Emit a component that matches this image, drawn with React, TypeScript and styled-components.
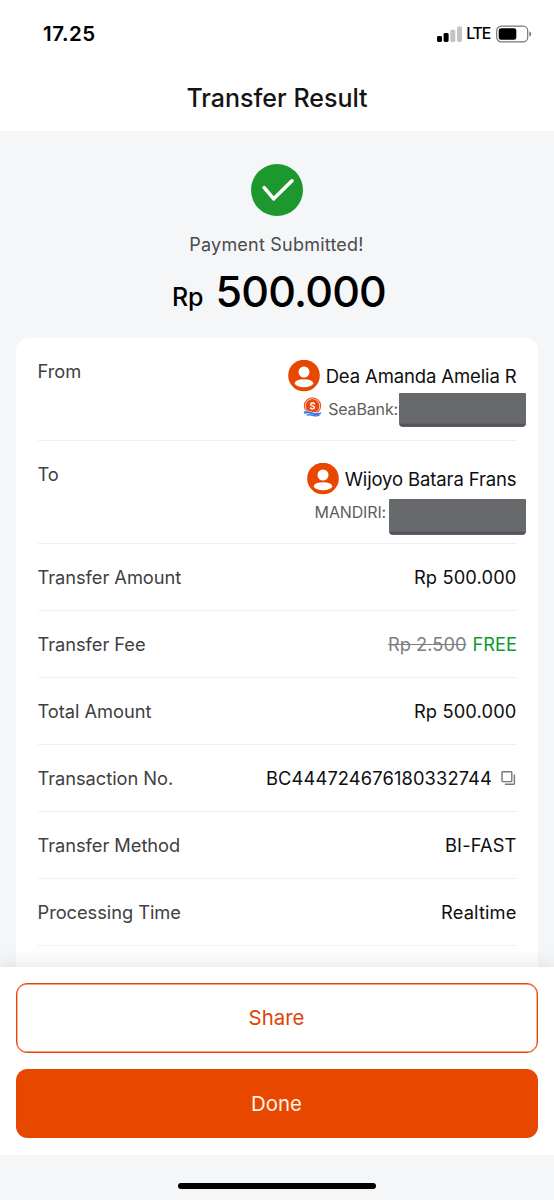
import React from "react";
import styled, { createGlobalStyle } from "styled-components";

const GlobalStyle = createGlobalStyle`
  * { box-sizing: border-box; }
  body {
    margin: 0;
    background: #f5f6f8;
    font-family: Inter, "Liberation Sans", sans-serif;
    color: #0e0e0f;
  }
`;

const Screen = styled.div`
  width: 554px;
  height: 1200px;
  display: flex;
  flex-direction: column;
  overflow: hidden;
  background: #f5f6f8;
`;

const StatusBar = styled.div`
  flex: none;
  height: 66px;
  padding: 1px 22px 0 43px;
  display: flex;
  justify-content: space-between;
  align-items: center;
  background: #fff;
`;

const Clock = styled.span`
  font-size: 20.5px;
  font-weight: 600;
  line-height: 24px;
  letter-spacing: 0.5px;
  color: #000;
`;

const StatusIcons = styled.div`
  display: flex;
  align-items: center;
`;

const Carrier = styled.span`
  margin: 1px 6px 0 4.5px;
  font-size: 15.8px;
  font-weight: 500;
  line-height: 20px;
  letter-spacing: -1.2px;
  color: #000;
`;

const Header = styled.header`
  flex: none;
  height: 65px;
  padding-bottom: 2px;
  display: flex;
  justify-content: center;
  align-items: center;
  background: #fff;
`;

const Title = styled.h1`
  margin: 0;
  font-size: 25px;
  font-weight: 500;
  line-height: 30px;
  letter-spacing: 0;
  color: #141414;
`;

const Content = styled.main`
  flex: 1;
  min-height: 0;
  overflow: hidden;
  padding: 0 16px;
`;

const Summary = styled.section`
  height: 207px;
  padding-top: 33px;
  display: flex;
  flex-direction: column;
  align-items: center;
`;

const Status = styled.p`
  margin: 17px 0 0;
  padding-right: 1px;
  font-size: 18px;
  line-height: 24px;
  letter-spacing: 0.22px;
  color: #4a4b4d;
`;

const Amount = styled.p`
  margin: 9px 0 0 4px;
  display: flex;
  align-items: baseline;
  gap: 12px;
  font-size: 43px;
  font-weight: 500;
  line-height: 50px;
  letter-spacing: -0.8px;
  color: #000;
`;

const Currency = styled.span`
  position: relative;
  top: -1px;
  font-size: 25px;
  letter-spacing: 0;
`;

const Card = styled.section`
  height: 700px;
  padding: 0 21.5px;
  border-radius: 13px;
  background: #fff;
`;

const Row = styled.div<{ $tall?: boolean }>`
  height: ${(p) => (p.$tall ? 103 : 67)}px;
  padding-top: ${(p) => (p.$tall ? 21 : 0)}px;
  display: flex;
  justify-content: space-between;
  align-items: ${(p) => (p.$tall ? "flex-start" : "center")};
  border-bottom: 1px solid #f0f0f1;
`;

const Label = styled.span`
  font-size: 18.3px;
  line-height: 24px;
  letter-spacing: -0.05px;
  color: #3f4042;
`;

const Value = styled.span`
  display: flex;
  align-items: center;
  font-size: 18.3px;
  line-height: 24px;
  letter-spacing: 0.13px;
  color: #0e0e0f;
`;

const Fee = styled(Value)`
  margin-right: -0.5px;
  letter-spacing: 0;
`;

const OldFee = styled.s`
  margin-right: 6px;
  color: #7d7e80;
`;

const Free = styled.span`
  color: #109a2b;
`;

const Party = styled.div`
  display: flex;
  flex-direction: column;
  align-items: flex-end;
`;

const PartyName = styled.div`
  height: 33px;
  padding-top: 1px;
  display: flex;
  align-items: center;
  gap: 5.5px;
  font-size: 18.5px;
  line-height: 24px;
  letter-spacing: -0.13px;
`;

const Account = styled.div`
  margin-top: -1px;
  margin-right: -9.5px;
  display: flex;
  align-items: flex-start;
`;

const BankName = styled.span<{ $gap: number }>`
  margin-right: ${(p) => p.$gap}px;
  font-size: 16px;
  line-height: 20px;
  letter-spacing: -0.15px;
  margin-top: 8px;
  color: #5d5e60;
`;

const BankLogo = styled.svg`
  margin: 6px 6.5px 0 0;
`;

const Redaction = styled.span<{ $w: number; $h: number; $top: number }>`
  width: ${(p) => p.$w}px;
  height: ${(p) => p.$h}px;
  margin-top: ${(p) => p.$top}px;
  border-radius: 1px 1px 4px 4px;
  background: linear-gradient(#66676a 0, #68696a 3px, #68696a calc(100% - 4px), #504b56 calc(100% - 2px), #65617d 100%);
`;

const CopyIcon = styled.svg`
  margin: 0 0.5px 0 9px;
`;

const Footer = styled.footer`
  position: relative;
  flex: none;
  height: 188px;
  padding: 16px;
  display: flex;
  flex-direction: column;
  gap: 16px;
  background: #fff;
  box-shadow: 0 0 20px rgba(0, 0, 0, 0.13);
  clip-path: inset(-30px 0 0 0);
`;

const Button = styled.button<{ $primary?: boolean }>`
  height: 69.7px;
  padding: 0 1px 0 0;
  border: 1px solid #e84700;
  box-shadow: inset 0 0 0 0.4px #e84700;
  border-radius: 11px;
  background: ${(p) => (p.$primary ? "#e84700" : "#fff")};
  color: ${(p) => (p.$primary ? "#fff3e9" : "#df4509")};
  font-family: inherit;
  font-size: 20.4px;
  line-height: 26px;
`;

const HomeArea = styled.div`
  flex: none;
  height: 45px;
  padding-top: 27.5px;
  display: flex;
  justify-content: center;
`;

const HomeIndicator = styled.span`
  width: 198px;
  height: 6.7px;
  border-radius: 4px;
  background: #000;
`;

const Signal = () => (
  <svg width="25" height="16" viewBox="0 0 25 16">
    <rect x="0" y="10" width="5" height="6" rx="1.4" fill="#000" />
    <rect x="6.6" y="7" width="5" height="9" rx="1.4" fill="#000" />
    <rect x="13.3" y="3.7" width="5" height="12.3" rx="1.4" fill="#c4c4c4" />
    <rect x="20" y="0.5" width="5" height="15.5" rx="1.4" fill="#c4c4c4" />
  </svg>
);

const Battery = () => (
  <svg width="36" height="18" viewBox="0 0 36 18">
    <rect x="0.7" y="1.2" width="31" height="15.6" rx="4.6" fill="none" stroke="#777" strokeWidth="1.2" />
    <rect x="2.7" y="3.2" width="17.6" height="11.6" rx="2.4" fill="#000" />
    <path d="M33.3 6.4q2 .9 2 2.6t-2 2.6z" fill="#777" />
  </svg>
);

const Check = () => (
  <svg width="52" height="52" viewBox="0 0 52 52">
    <circle cx="26" cy="26" r="26" fill="#1c982f" />
    <path d="M13.2 23.7L22.7 34.8L41 16.8" fill="none" stroke="#fff" strokeWidth="3.6" strokeLinecap="round" strokeLinejoin="round" />
  </svg>
);

const Avatar = () => (
  <svg width="32" height="32" viewBox="0 0 32 32">
    <circle cx="16" cy="15.500" r="15.8" fill="#e84700" />
    <circle cx="16" cy="12" r="5.5" fill="#fff" />
    <ellipse cx="16" cy="23.2" rx="9.2" ry="4" fill="#fff" />
  </svg>
);

const SeaBankLogo = () => (
  <BankLogo width="19" height="20" viewBox="0 0 19 20">
    <circle cx="9.5" cy="9" r="8.1" fill="#fff" stroke="#ee5a26" strokeWidth="1.2" />
    <circle cx="9.5" cy="9" r="6.9" fill="#e84a14" />
    <path d="M11.4 6.9C10.6 5.6 7.7 5.6 7.7 7.4C7.7 9.2 11.4 8.6 11.4 10.5C11.4 12.3 8.5 12.3 7.6 11" fill="none" stroke="#fff" strokeWidth="1.4" strokeLinecap="round" />
    <path d="M0 14.1q5-1 9.5.8t9.5-.4V20H0z" fill="#fff" />
    <path d="M.6 14.6q4.400-1.100 8.700.8t9.100-.2l-.8 2.100q-4.100 1.600-8.500-.1t-7.500-.5z" fill="#2f6fe0" />
    <path d="M3.500 18.100q3.200-.8 6.200.2t6.800.1" fill="none" stroke="#3c7be6" strokeWidth="1.400" />
  </BankLogo>
);

const Copy = () => (
  <CopyIcon width="15" height="15" viewBox="0 0 15 15" fill="none" stroke="#77787a" strokeWidth="1.4">
    <rect x="1" y="0.8" width="9.8" height="9.8" rx="0.8" />
    <path d="M13.4 3.400V12.500Q13.400 13.200 12.700 13.200H3.800" />
  </CopyIcon>
);

export default function App() {
  return (
    <>
      <GlobalStyle />
      <Screen>
        <StatusBar>
          <Clock>17.25</Clock>
          <StatusIcons>
            <Signal />
            <Carrier>LTE</Carrier>
            <Battery />
          </StatusIcons>
        </StatusBar>
        <Header>
          <Title>Transfer Result</Title>
        </Header>
        <Content>
          <Summary>
            <Check />
            <Status>Payment Submitted!</Status>
            <Amount>
              <Currency>Rp</Currency>500.000
            </Amount>
          </Summary>
          <Card>
            <Row $tall>
              <Label>From</Label>
              <Party>
                <PartyName>
                  <Avatar />
                  Dea Amanda Amelia R
                </PartyName>
                <Account>
                  <SeaBankLogo />
                  <BankName $gap={1}>SeaBank:</BankName>
                  <Redaction $w={127} $h={34} $top={2} />
                </Account>
              </Party>
            </Row>
            <Row $tall>
              <Label>To</Label>
              <Party>
                <PartyName>
                  <Avatar />
                  Wijoyo Batara Frans
                </PartyName>
                <Account>
                  <BankName $gap={3}>MANDIRI:</BankName>
                  <Redaction $w={137} $h={36} $top={5} />
                </Account>
              </Party>
            </Row>
            <Row>
              <Label>Transfer Amount</Label>
              <Value>Rp 500.000</Value>
            </Row>
            <Row>
              <Label>Transfer Fee</Label>
              <Fee>
                <OldFee>Rp 2.500</OldFee>
                <Free>FREE</Free>
              </Fee>
            </Row>
            <Row>
              <Label>Total Amount</Label>
              <Value>Rp 500.000</Value>
            </Row>
            <Row>
              <Label>Transaction No.</Label>
              <Value>
                BC444724676180332744
                <Copy />
              </Value>
            </Row>
            <Row>
              <Label>Transfer Method</Label>
              <Value>BI-FAST</Value>
            </Row>
            <Row>
              <Label>Processing Time</Label>
              <Value>Realtime</Value>
            </Row>
          </Card>
        </Content>
        <Footer>
          <Button>Share</Button>
          <Button $primary>Done</Button>
        </Footer>
        <HomeArea>
          <HomeIndicator />
        </HomeArea>
      </Screen>
    </>
  );
}
